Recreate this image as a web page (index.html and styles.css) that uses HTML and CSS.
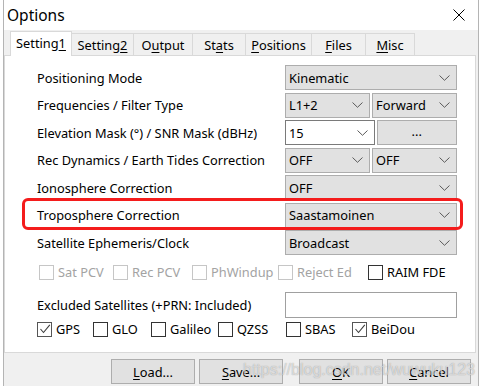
FILE: index.html
```html
<!DOCTYPE html>
<html>
<head>
<meta charset="utf-8">
<title>Options</title>
<link rel="stylesheet" href="styles.css">
</head>
<body>
<div class="window">
  <div class="titlebar">
    <span class="title">Options</span>
    <svg class="close" width="12" height="12" viewBox="0 0 12 12"><path d="M0.5 0.5L11.5 11.5M11.5 0.5L0.5 11.5" stroke="#000" stroke-width="1" fill="none"/></svg>
  </div>
  <div class="client">
    <div class="tabs">
      <div class="tab active">Setting<u>1</u></div>
      <div class="tab">Setting<u>2</u></div>
      <div class="tab">O<u>u</u>tput</div>
      <div class="tab">St<u>a</u>ts</div>
      <div class="tab"><u>P</u>ositions</div>
      <div class="tab"><u>F</u>iles</div>
      <div class="tab"><u>M</u>isc</div>
    </div>
    <div class="panel">
      <div class="form">
        <div class="label">Positioning Mode</div>
        <div class="combo"><span>Kinematic</span><svg class="chev" width="11" height="6" viewBox="0 0 11 6"><path d="M0.5 0.5L5.5 5.3L10.5 0.5" stroke="#5a5a5a" fill="none"/></svg></div>

        <div class="label">Frequencies / Filter Type</div>
        <div class="pair">
          <div class="combo"><span>L1+2</span><svg class="chev" width="11" height="6" viewBox="0 0 11 6"><path d="M0.5 0.5L5.5 5.3L10.5 0.5" stroke="#5a5a5a" fill="none"/></svg></div>
          <div class="combo"><span>Forward</span><svg class="chev" width="11" height="6" viewBox="0 0 11 6"><path d="M0.5 0.5L5.5 5.3L10.5 0.5" stroke="#5a5a5a" fill="none"/></svg></div>
        </div>

        <div class="label">Elevation Mask (°) / SNR Mask (dBHz)</div>
        <div class="pair">
          <div class="combo edit"><span>15</span><svg class="chev" width="11" height="6" viewBox="0 0 11 6"><path d="M0.5 0.5L5.5 5.3L10.5 0.5" stroke="#5a5a5a" fill="none"/></svg></div>
          <div class="dots">...</div>
        </div>

        <div class="label">Rec Dynamics / Earth Tides Correction</div>
        <div class="pair">
          <div class="combo"><span>OFF</span><svg class="chev" width="11" height="6" viewBox="0 0 11 6"><path d="M0.5 0.5L5.5 5.3L10.5 0.5" stroke="#5a5a5a" fill="none"/></svg></div>
          <div class="combo"><span>OFF</span><svg class="chev" width="11" height="6" viewBox="0 0 11 6"><path d="M0.5 0.5L5.5 5.3L10.5 0.5" stroke="#5a5a5a" fill="none"/></svg></div>
        </div>

        <div class="label">Ionosphere Correction</div>
        <div class="combo"><span>OFF</span><svg class="chev" width="11" height="6" viewBox="0 0 11 6"><path d="M0.5 0.5L5.5 5.3L10.5 0.5" stroke="#5a5a5a" fill="none"/></svg></div>

        <div class="label">Troposphere Correction</div>
        <div class="combo"><span>Saastamoinen</span><svg class="chev" width="11" height="6" viewBox="0 0 11 6"><path d="M0.5 0.5L5.5 5.3L10.5 0.5" stroke="#5a5a5a" fill="none"/></svg></div>

        <div class="label">Satellite Ephemeris/Clock</div>
        <div class="combo"><span>Broadcast</span><svg class="chev" width="11" height="6" viewBox="0 0 11 6"><path d="M0.5 0.5L5.5 5.3L10.5 0.5" stroke="#5a5a5a" fill="none"/></svg></div>
      </div>

      <div class="checks opts">
        <div class="check disabled"><span class="box"></span><span>Sat PCV</span></div>
        <div class="check disabled"><span class="box"></span><span>Rec PCV</span></div>
        <div class="check disabled"><span class="box"></span><span>PhWindup</span></div>
        <div class="check disabled"><span class="box"></span><span>Reject Ed</span></div>
        <div class="check"><span class="box"></span><span>RAIM FDE</span></div>
      </div>

      <div class="excl">
        <div class="label">Excluded Satellites (+PRN: Included)</div>
        <div class="input"></div>
      </div>

      <div class="checks sats">
        <div class="check"><span class="box checked"><svg width="12" height="12" viewBox="0 0 12 12"><path d="M1.5 6L4.5 9.5L10.8 1.8" stroke="#3c3c3c" stroke-width="1.1" fill="none"/></svg></span><span>GPS</span></div>
        <div class="check"><span class="box"></span><span>GLO</span></div>
        <div class="check"><span class="box"></span><span>Galileo</span></div>
        <div class="check"><span class="box"></span><span>QZSS</span></div>
        <div class="check"><span class="box"></span><span>SBAS</span></div>
        <div class="check"><span class="box checked"><svg width="12" height="12" viewBox="0 0 12 12"><path d="M1.5 6L4.5 9.5L10.8 1.8" stroke="#3c3c3c" stroke-width="1.1" fill="none"/></svg></span><span>BeiDou</span></div>
      </div>
    </div>
    <div class="buttons">
      <div class="button"><span><u>L</u>oad...</span></div>
      <div class="button"><span><u>S</u>ave...</span></div>
      <div class="button ok"><span><u>O</u>K</span></div>
      <div class="button"><span><u>C</u>ancel</span></div>
    </div>
  </div>
</div>
<div class="highlight"></div>
<div class="watermark">https://blog.csdn.net/wuwuku123</div>
</body>
</html>
```

FILE: styles.css
```css
* { box-sizing: border-box; }
html, body { margin: 0; padding: 0; }
body {
  width: 483px;
  height: 386px;
  overflow: hidden;
  background: #fff;
  font-family: "Noto Sans", "Open Sans", sans-serif;
  font-size: 12.8px;
  color: #000;
  position: relative;
}
u { text-decoration-thickness: 1px; text-underline-offset: 2px; }

.window {
  margin-left: 3px;
  width: 476px;
  height: 386px;
  border-left: 1px solid #b4b4b4;
  border-right: 1px solid #b4b4b4;
  display: flex;
  flex-direction: column;
}

.titlebar {
  height: 30px;
  flex: none;
  background: #fff;
  display: flex;
  align-items: center;
  justify-content: space-between;
  padding: 0 13px 1px 3px;
}
.title { font-size: 15.5px; }
.close { display: block; }

.client {
  flex: 1;
  background: #f0f0f0;
  padding-top: 1px;
}

.tabs {
  display: grid;
  grid-template-columns: 62px 62px 59px 53px 66px 54px 49px;
  align-items: end;
  margin-left: 6px;
  height: 24px;
  position: relative;
  z-index: 1;
}
.tab {
  height: 22px;
  display: flex;
  align-items: center;
  justify-content: center;
  border: 1px solid #d9d9d9;
  border-bottom: none;
  border-left: none;
  background: #f0f0f0;
  font-size: 12.8px;
}
.tab.active {
  height: 25px;
  margin-bottom: -1px;
  background: #fff;
  border-left: 1px solid #d9d9d9;
  padding-bottom: 2px;
}

.panel {
  margin-right: 2px;
  height: 298px;
  background: #fff;
  border: 1px solid #d9d9d9;
  padding: 9px 0 0 32px;
}

.form {
  display: grid;
  grid-template-columns: 248px 172px;
  grid-auto-rows: 25px;
  row-gap: 2.5px;
}
.label {
  display: flex;
  align-items: center;
  white-space: nowrap;
}
.pair {
  display: flex;
  gap: 2px;
}
.pair > * { flex: 1; }

.combo {
  display: flex;
  align-items: center;
  justify-content: space-between;
  background: #e1e1e1;
  border: 1px solid #adadad;
  padding: 0 6px 0 3px;
}
.combo.edit {
  background: #fff;
  border-color: #7a7a7a;
}
.chev { display: block; flex: none; }
.dots {
  display: flex;
  align-items: center;
  justify-content: center;
  background: #e1e1e1;
  border: 1px solid #adadad;
  padding-bottom: 3px;
}

.checks {
  display: grid;
  align-items: center;
}
.opts {
  margin-top: 3px;
  height: 28px;
  padding-left: 2px;
  grid-template-columns: 74px 79px 86px 90px auto;
}
.sats {
  height: 22px;
  grid-template-columns: 56px 58px 67px 68px 66px auto;
}
.check {
  display: flex;
  align-items: center;
  gap: 4px;
  white-space: nowrap;
}
.box {
  width: 15px;
  height: 15px;
  flex: none;
  border: 1px solid #333;
  background: #fff;
  display: flex;
  align-items: center;
  justify-content: center;
}
.box.checked { border-color: #555; }
.box svg { display: block; }
.disabled { color: #a3a3a3; }
.disabled .box { border-color: #c6c6c6; }

.excl {
  display: grid;
  grid-template-columns: 248px 172px;
  height: 26px;
  margin-top: 6px;
}
.input {
  background: #fff;
  border: 1px solid #a0a0a0;
}

.buttons {
  display: flex;
  padding: 6px 0 0 107px;
}
.button {
  width: 84px;
  height: 25px;
  flex: none;
  background: #e1e1e1;
  border: 1px solid #adadad;
  display: flex;
  align-items: center;
  justify-content: center;
  margin-right: 4px;
}
.button.ok { margin-left: 12px; }

.highlight {
  position: absolute;
  left: 22px;
  top: 198px;
  width: 441px;
  height: 32px;
  border: 3px solid #f41c1c;
  border-radius: 6px;
}

.watermark {
  position: absolute;
  left: 243px;
  top: 361px;
  font-family: "Liberation Sans", Arial, sans-serif;
  font-size: 16px;
  color: rgba(255, 255, 255, 0.6);
  text-shadow: 0 0 1px rgba(90, 90, 90, 0.6);
  white-space: nowrap;
}
```
